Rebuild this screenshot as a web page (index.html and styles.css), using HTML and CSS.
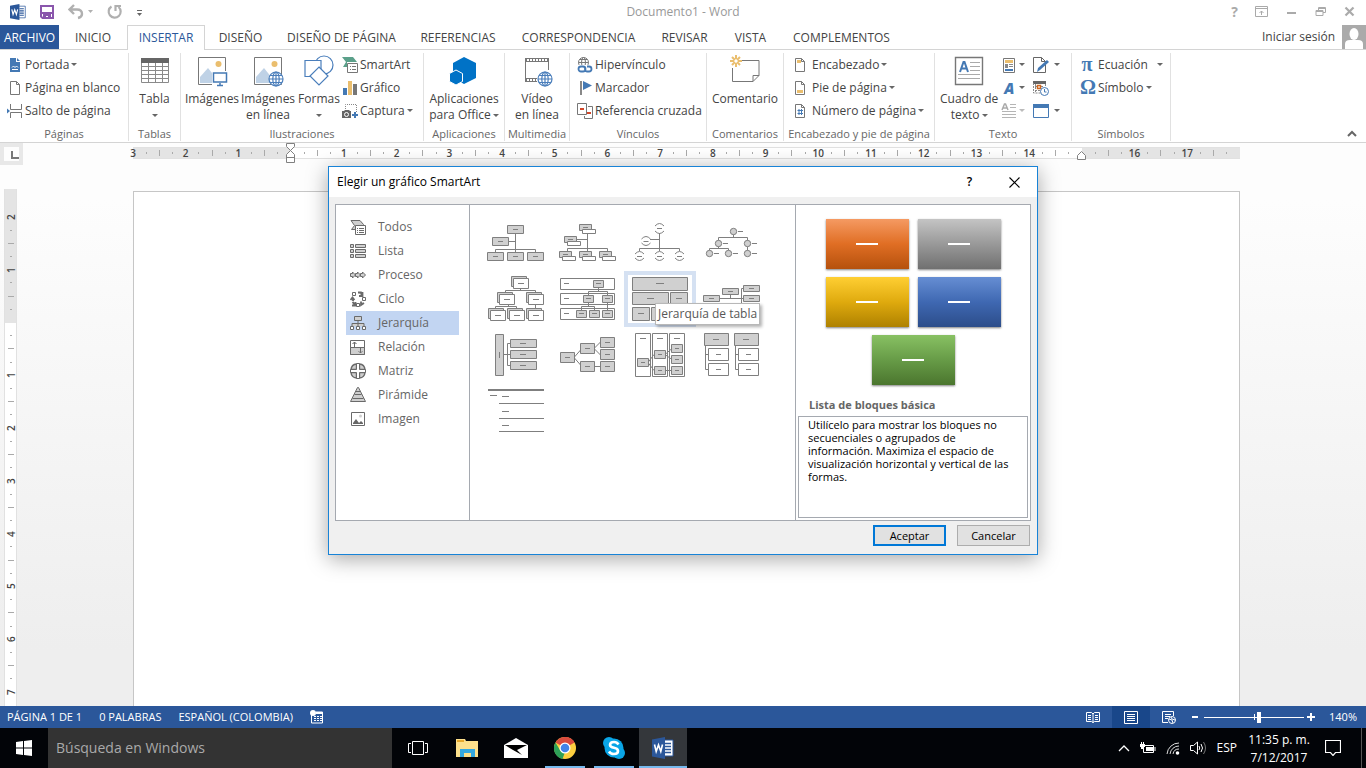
FILE: index.html
```html
<!DOCTYPE html>
<html lang="es">
<head>
    <meta charset="UTF-8">
    <meta name="viewport" content="width=device-width, initial-scale=1.0">
    <title>Documento1 - Word</title>
    <link rel="stylesheet" href="styles.css">
</head>
<body>
    <!-- shared symbols -->
    <svg class="defs" aria-hidden="true">
        <symbol id="word" viewBox="0 0 22 22">
            <path d="M11 3h10v16H11z" fill="#fff" stroke="#2b579a"/>
            <path d="M13 6.5h6M13 9.5h6M13 12.5h6M13 15.5h6" stroke="#2b579a" stroke-width="1.5"/>
            <path d="M0 2.500L13 0v22L0 19.500z" fill="#2b579a"/>
            <path d="M2.500 7.500l1.700 7 2.300-6.500 2.300 6.500 1.700-7" fill="none" stroke="#fff" stroke-width="1.600"/>
        </symbol>
        <symbol id="globe" viewBox="0 0 16 16">
            <circle cx="8" cy="8" r="7" fill="#fff"/>
            <g fill="none" stroke="#4a7ebb" stroke-width="1.200"><circle cx="8" cy="8" r="7"/><ellipse cx="8" cy="8" rx="3.200" ry="7"/><path d="M8 1v14M1 8h14M2 4.500h12M2 11.500h12"/></g>
        </symbol>
        <symbol id="sheet" viewBox="0 0 16 16">
            <path d="M3.500 1.500h6l3 3v10h-9z" fill="#fff" stroke="#777"/>
            <path d="M9.500 1.500v3h3" fill="none" stroke="#777"/>
        </symbol>
        <symbol id="photo" viewBox="0 0 32 32">
            <path d="M2.500 2.500h27v27h-27z" fill="#fff" stroke="#777"/>
            <circle cx="22.500" cy="9" r="3" fill="#eabe6e"/>
            <path d="M4 28V22l8-9 12 15z" fill="#bfd2e6"/>
        </symbol>
    </svg>

    <div class="window">
        <header class="titlebar">
            <div class="quick">
                <svg width="16" height="16"><use href="#word"/></svg>
                <button aria-label="Guardar"><svg width="16" height="16" viewBox="0 0 16 16"><path d="M2 2h12v12H3.500L2 12.500z" fill="#fff" stroke="#8a56ac" stroke-width="2"/><path d="M1 8h14v2H1zM4 10h8v5H9v-3H7v3H4z" fill="#8a56ac"/></svg></button>
                <button aria-label="Deshacer"><svg width="26" height="16" viewBox="0 0 26 16"><path d="M6 1L1.500 5.500 6 10M2 5.500h7q5 0 5 4.500 0 3-4 4" fill="none" stroke="#b0b0b0" stroke-width="2.400"/><path d="M20 6h5l-2.500 3z" fill="#b0b0b0"/></svg></button>
                <button aria-label="Rehacer"><svg width="16" height="16" viewBox="0 0 16 16"><path d="M4.500 2.500a6 6 0 1 0 7 .5M8.500 7V2H14" fill="none" stroke="#b0b0b0" stroke-width="2.200"/></svg></button>
                <button aria-label="Personalizar"><svg width="8" height="16" viewBox="0 0 8 16"><path d="M1 6.500h5" stroke="#666"/><path d="M1 9h5l-2.500 3z" fill="#666"/></svg></button>
            </div>
            <h1>Documento1 - Word</h1>
            <div class="winbtns">
                <button aria-label="Ayuda" class="help">?</button>
                <button aria-label="Opciones de la cinta"><svg width="14" height="12" viewBox="0 0 14 12"><path d="M.5.5h12v10H.5zM.5 2.500h12M6.500 9V5M4.500 7L6.500 5l2 2" fill="none" stroke="#aaa"/></svg></button>
                <button aria-label="Minimizar"><svg width="12" height="12" viewBox="0 0 12 12"><path d="M1 7h9" stroke="#aaa" stroke-width="2"/></svg></button>
                <button aria-label="Restaurar"><svg width="12" height="12" viewBox="0 0 12 12"><path d="M3.500 4V1.500h7v5H8M1 4.500h7v5H1zM1 5.500h7M3 2.500h8" fill="none" stroke="#aaa"/></svg></button>
                <button aria-label="Cerrar"><svg width="12" height="12" viewBox="0 0 12 12"><path d="M1.500 1.500l8 8M9.500 1.500l-8 8" stroke="#aaa" stroke-width="2.200"/></svg></button>
            </div>
        </header>

        <div class="tabrow">
            <nav class="tabs">
                <a href="#" class="file">ARCHIVO</a>
                <a href="#">INICIO</a>
                <a href="#" class="active">INSERTAR</a>
                <a href="#">DISEÑO</a>
                <a href="#">DISEÑO DE PÁGINA</a>
                <a href="#">REFERENCIAS</a>
                <a href="#">CORRESPONDENCIA</a>
                <a href="#">REVISAR</a>
                <a href="#">VISTA</a>
                <a href="#">COMPLEMENTOS</a>
            </nav>
            <a href="#" class="signin">Iniciar sesión
                <svg width="24" height="24" viewBox="0 0 24 24"><path d="M0 0h24v24H0z" fill="#aaa"/><ellipse cx="12" cy="9" rx="4.500" ry="6" fill="#fff"/><path d="M3 24v-5q0-4 5-4h8q5 0 5 4v5z" fill="#fff"/></svg>
            </a>
        </div>

        <div class="ribbon">
            <section class="group pages">
                <div class="tools">
                    <div class="stack">
                        <button class="small drop"><svg width="16" height="16" viewBox="0 0 16 16"><path d="M3 1h6v4h4v10H3z" fill="#4479b4"/><path d="M10 1l3 3h-3z" fill="#4479b4"/><path d="M5 10.500l1.500-1.500L8 10.500 9.500 9l1.500 1.500M5 12.500h6" fill="none" stroke="#fff"/></svg>Portada</button>
                        <button class="small"><svg width="16" height="16"><use href="#sheet"/></svg>Página en blanco</button>
                        <button class="small"><svg width="16" height="16" viewBox="0 0 16 16"><path d="M3.500 1v5.500h11V1M3.500 15v-5.500h11V15" fill="none" stroke="#777"/><path d="M0 5.500L3 8 0 10.500z" fill="#4479b4"/></svg>Salto de página</button>
                    </div>
                </div>
                <h2>Páginas</h2>
            </section>

            <section class="group tables">
                <div class="tools">
                    <button class="big"><svg width="32" height="32" viewBox="0 0 32 32"><path d="M2.500 3.500h27v24h-27zM2 11.500h28M2 15.500h28M2 19.500h28M2 23.500h28M9.500 7v20M16.500 7v20M23.500 7v20" fill="#fff" stroke="#8a8a8a"/><path d="M2 3h28v5H2z" fill="#666"/></svg><span>Tabla</span><span class="arrow"></span></button>
                </div>
                <h2>Tablas</h2>
            </section>

            <section class="group illus">
                <div class="tools">
                    <button class="big"><svg width="32" height="32" viewBox="0 0 32 32"><use href="#photo" width="32" height="32"/><path d="M16 16h16v14H16z" fill="#fff"/><path d="M17.500 18h13v9h-13z" fill="#fff" stroke="#4479b4" stroke-width="1.500"/><path d="M24 28v3M21 30.500h6" stroke="#4479b4" stroke-width="1.500"/></svg><span>Imágenes</span></button>
                    <button class="big"><svg width="32" height="32" viewBox="0 0 32 32"><use href="#photo" width="32" height="32"/><use href="#globe" x="16" y="16" width="16" height="16"/></svg><span>Imágenes<br>en línea</span></button>
                    <button class="big shapes"><svg width="32" height="32" viewBox="0 0 32 32"><g fill="#fff" stroke="#4a7ebb" stroke-width="1.200"><circle cx="21" cy="10" r="9"/><path d="M2 5.500h16v16H2z"/><path d="M16 12l9 9-9 9-9-9z"/></g></svg><span>Formas</span><span class="arrow"></span></button>
                    <div class="stack">
                        <button class="small"><svg width="16" height="16" viewBox="0 0 16 16"><path d="M0 0h11l4 5H5v5H1l3-5z" fill="#5ba08a"/><path d="M5.500 6.500h10v9h-10z" fill="#fff" stroke="#777"/><path d="M8 9.500h1M10 9.500h4M8 12.500h1M10 12.500h4" stroke="#777"/></svg>SmartArt</button>
                        <button class="small"><svg width="16" height="16" viewBox="0 0 16 16"><path d="M1 8h4v7H1z" fill="#4479b4"/><path d="M6 1h4v14H6z" fill="#eabe6e"/><path d="M11 4h4v11h-4z" fill="#777"/></svg>Gráfico</button>
                        <button class="small drop"><svg width="16" height="16" viewBox="0 0 16 16"><path d="M3.500 6V1.500h11V9" fill="none" stroke="#888" stroke-dasharray="1 1"/><path d="M0 8h2l1-1h4l1 1h1v7H0z" fill="#666"/><circle cx="4.500" cy="11.500" r="2" fill="#666" stroke="#fff"/><path d="M13 9v6M10 12h6" stroke="#4479b4" stroke-width="2"/></svg>Captura</button>
                    </div>
                </div>
                <h2>Ilustraciones</h2>
            </section>

            <section class="group apps">
                <div class="tools">
                    <button class="big"><svg width="32" height="32" viewBox="0 0 32 32"><path d="M16 2l12 6v15l-12 6-11-6V8z" fill="#0072c6"/><path d="M8 15l6.500 3.500v8L8 30 1.500 26.500v-8z" fill="#0072c6" stroke="#fff"/></svg><span>Aplicaciones<br>para Office<i class="arrow"></i></span></button>
                </div>
                <h2>Aplicaciones</h2>
            </section>

            <section class="group media">
                <div class="tools">
                    <button class="big"><svg width="32" height="32" viewBox="0 0 32 32"><path d="M4.500 3v23M27.500 3v12" stroke="#777"/><path d="M4 3h24v4H4zM4 23h12v4H4z" fill="#777"/><path d="M6 5h21M6 25h10" stroke="#fff" stroke-width="2" stroke-dasharray="2 1"/><use href="#globe" x="16" y="16" width="16" height="16"/></svg><span>Vídeo<br>en línea</span></button>
                </div>
                <h2>Multimedia</h2>
            </section>

            <section class="group links">
                <div class="tools">
                    <div class="stack">
                        <button class="small"><svg width="16" height="16" viewBox="0 0 16 16"><g fill="none" stroke="#777"><circle cx="6.500" cy="5.500" r="5"/><ellipse cx="6.500" cy="5.500" rx="2" ry="5"/><path d="M1.500 5.500h10M3 2.500h7"/></g><path d="M0 8h16v8H0z" fill="#fff"/><path d="M5 9.500h1a2.500 2.500 0 0 1 0 5H4a2.500 2.500 0 0 1 0-5zM10 9.500h2a2.500 2.500 0 0 1 0 5h-2a2.500 2.500 0 0 1-2-3" fill="none" stroke="#4479b4" stroke-width="1.800"/></svg>Hipervínculo</button>
                        <button class="small"><svg width="16" height="16" viewBox="0 0 16 16"><path d="M3 1h2v14H3z" fill="#888"/><path d="M6 1l9 4.500L6 10z" fill="#4479b4"/></svg>Marcador</button>
                        <button class="small"><svg width="16" height="16" viewBox="0 0 16 16"><path d="M.5.5h9v11h-9zM11 3.500h4.500v12H7.500V13" fill="none" stroke="#777"/><path d="M3 5h4v2H3zM10 9h4v2h-4z" fill="#d2472a"/></svg>Referencia cruzada</button>
                    </div>
                </div>
                <h2>Vínculos</h2>
            </section>

            <section class="group comments">
                <div class="tools">
                    <button class="big"><svg width="32" height="32" viewBox="0 0 32 32"><path d="M12 5.500h18v15l-6 6H3.500V13M30 20.500h-6v6" fill="none" stroke="#777"/><path d="M7 0v4M7 8v4M1 6h4M9 6h4M3 2l3 3M8 7l3 3M11 2L8 5M6 7l-3 3" stroke="#eabe6e" stroke-width="2"/></svg><span>Comentario</span></button>
                </div>
                <h2>Comentarios</h2>
            </section>

            <section class="group header">
                <div class="tools">
                    <div class="stack">
                        <button class="small drop"><svg width="16" height="16" viewBox="0 0 16 16"><use href="#sheet" width="16" height="16"/><path d="M5 3h4v3H5z" fill="#eabe6e"/></svg>Encabezado</button>
                        <button class="small drop"><svg width="16" height="16" viewBox="0 0 16 16"><use href="#sheet" width="16" height="16"/><path d="M5 10h6v3H5z" fill="#eabe6e"/></svg>Pie de página</button>
                        <button class="small drop"><svg width="16" height="16" viewBox="0 0 16 16"><use href="#sheet" width="16" height="16"/><path d="M7 6v6M9.500 6v6M5.500 7.500H11M5.500 10.500H11" stroke="#4479b4"/></svg>Número de página</button>
                    </div>
                </div>
                <h2>Encabezado y pie de página</h2>
            </section>

            <section class="group text">
                <div class="tools">
                    <button class="big"><svg width="32" height="32" viewBox="0 0 32 32"><path d="M2.500 2.500h27v27h-27z" fill="#fff" stroke="#777" stroke-width="1.400"/><path d="M17 7.500h10M17 11.500h10M17 15.500h10M5 19.500h22M5 23.500h22" stroke="#aaa"/><path d="M7 17l3.500-10h1L15 17M8.500 13.500h5" fill="none" stroke="#4479b4" stroke-width="2"/></svg><span>Cuadro de<br>texto<i class="arrow"></i></span></button>
                    <div class="stack icons">
                        <button class="small drop" aria-label="Elementos rápidos"><svg width="16" height="16" viewBox="0 0 16 16"><path d="M2.500 1.500h11v14h-11z" fill="#fff" stroke="#777"/><path d="M4 3h8v3H4z" fill="#eabe6e"/><path d="M4 7h3v4H4z" fill="#888"/><path d="M8 7.500h4M8 9.500h4" stroke="#888"/><path d="M4 12h8v2H4z" fill="#4479b4"/></svg></button>
                        <button class="small drop" aria-label="WordArt"><b class="wordart">A</b></button>
                        <button class="small drop off" aria-label="Letra capital"><svg width="16" height="16" viewBox="0 0 16 16"><path d="M1 7l2.500-6h1L7 7M2 5h4" fill="none" stroke="#aaa" stroke-width="1.500"/><path d="M9 1.500h6M9 4.500h6M1 8.500h14M1 11.500h14M1 14.500h14" stroke="#b5b5b5"/></svg></button>
                    </div>
                    <div class="stack icons">
                        <button class="small drop" aria-label="Línea de firma"><svg width="16" height="16" viewBox="0 0 16 16"><path d="M.5.5h8l4 4v11H.5zM8.500.500v4h4" fill="#fff" stroke="#666"/><path d="M4 15l1-4 9-8 2 2-9 8z" fill="#4479b4"/></svg></button>
                        <button class="small" aria-label="Fecha y hora"><svg width="16" height="16" viewBox="0 0 16 16"><path d="M0 1h13v3H0z" fill="#666"/><path d="M.5 3v10h7M12.500 4v3M2 6.500h9M2 10.500h5M2.500 4v8" fill="none" stroke="#888" stroke-dasharray="2 1"/><path d="M4.500 5.500h3v3h-3z" fill="#fff" stroke="#d2671e" stroke-width="1.500"/><circle cx="11.500" cy="11.500" r="4" fill="#fff" stroke="#4479b4"/><path d="M11.500 9v3h2" fill="none" stroke="#4479b4"/></svg></button>
                        <button class="small drop" aria-label="Objeto"><svg width="16" height="16" viewBox="0 0 16 16"><path d="M.5 1.500h15v13H.5z" fill="#fff" stroke="#4479b4"/><path d="M0 1h16v4H0z" fill="#4479b4"/></svg></button>
                    </div>
                </div>
                <h2>Texto</h2>
            </section>

            <section class="group symbols">
                <div class="tools">
                    <div class="stack">
                        <button class="small drop wide"><b>π</b>Ecuación</button>
                        <button class="small drop"><b>Ω</b>Símbolo</button>
                    </div>
                </div>
                <h2>Símbolos</h2>
            </section>
            <button class="collapse" aria-label="Contraer la cinta"><svg width="10" height="8" viewBox="0 0 10 8"><path d="M1 6l4-4 4 4" fill="none" stroke="#666" stroke-width="2"/></svg></button>
        </div>

        <main class="workspace">
            <div class="topruler">
                <div class="corner"><span></span></div>
                <div class="ruler">
                    <span class="cm out"><b>3</b><i></i><i></i><i></i></span>
                    <span class="cm out"><b>2</b><i></i><i></i><i></i></span>
                    <span class="cm out"><b>1</b><i></i><i></i><i></i></span>
                    <span class="cm"><b><svg width="10" height="20" viewBox="0 0 10 20"><path d="M.5.500h8v3l-4 4 4 4v8h-8v-8l4-4-4-4zM.5 14.500h8" fill="#fff" stroke="#808080"/></svg></b><i></i><i></i><i></i></span>
                    <span class="cm"><b>1</b><i></i><i></i><i></i></span>
                    <span class="cm"><b>2</b><i></i><i></i><i></i></span>
                    <span class="cm"><b>3</b><i></i><i></i><i></i></span>
                    <span class="cm"><b>4</b><i></i><i></i><i></i></span>
                    <span class="cm"><b>5</b><i></i><i></i><i></i></span>
                    <span class="cm"><b>6</b><i></i><i></i><i></i></span>
                    <span class="cm"><b>7</b><i></i><i></i><i></i></span>
                    <span class="cm"><b>8</b><i></i><i></i><i></i></span>
                    <span class="cm"><b>9</b><i></i><i></i><i></i></span>
                    <span class="cm"><b>10</b><i></i><i></i><i></i></span>
                    <span class="cm"><b>11</b><i></i><i></i><i></i></span>
                    <span class="cm"><b>12</b><i></i><i></i><i></i></span>
                    <span class="cm"><b>13</b><i></i><i></i><i></i></span>
                    <span class="cm"><b>14</b><i></i><i></i><i></i></span>
                    <span class="cm out"><b><svg width="10" height="20" viewBox="0 0 10 20"><path d="M.5 16.500v-4l4-4 4 4v4z" fill="#fff" stroke="#808080"/></svg></b><i></i><i></i><i></i></span>
                    <span class="cm out"><b>16</b><i></i><i></i><i></i></span>
                    <span class="cm out"><b>17</b><i></i><i></i><i></i></span>
                </div>
            </div>
            <div class="canvas">
                <div class="sideruler">
                    <span class="cm out"></span>
                    <span class="cm out"><b>2</b><i></i><i></i><i></i></span>
                    <span class="cm out"><b>1</b><i></i><i></i><i></i></span>
                    <span class="cm"><b></b><i></i><i></i><i></i></span>
                    <span class="cm"><b>1</b><i></i><i></i><i></i></span>
                    <span class="cm"><b>2</b><i></i><i></i><i></i></span>
                    <span class="cm"><b>3</b><i></i><i></i><i></i></span>
                    <span class="cm"><b>4</b><i></i><i></i><i></i></span>
                    <span class="cm"><b>5</b><i></i><i></i><i></i></span>
                    <span class="cm"><b>6</b><i></i><i></i><i></i></span>
                    <span class="cm last"><b>7</b></span>
                </div>
                <div class="page"></div>
            </div>
        </main>

        <footer class="status">
            <span>PÁGINA 1 DE 1</span>
            <span>0 PALABRAS</span>
            <span>ESPAÑOL (COLOMBIA)</span>
            <svg width="14" height="14" viewBox="0 0 14 14"><path d="M1.500 5v8h11V2H6" fill="none" stroke="#fff"/><path d="M6 2h7v2H6z" fill="#fff"/><circle cx="3" cy="3" r="3" fill="#fff"/><path d="M4 6.500h8M4 8.500h8M4 10.500h8" stroke="#fff" stroke-dasharray="2 1"/></svg>
            <div class="views">
                <button aria-label="Modo de lectura"><svg width="14" height="12" viewBox="0 0 14 12"><path d="M.5 1.500h5L7 3l1.500-1.500h5v9h-5L7 11.500l-1.500-1h-5zM7 3v9M2 4.500h3M2 6.500h3M2 8.500h3M9 4.500h3M9 6.500h3M9 8.500h3" fill="none" stroke="#fff"/></svg></button>
                <button aria-label="Diseño de impresión" class="on"><svg width="14" height="13" viewBox="0 0 14 13"><path d="M.5.5h13v12H.5zM3 3.500h8M3 5.500h8M3 7.500h8M3 9.500h8" fill="none" stroke="#fff"/></svg></button>
                <button aria-label="Diseño web"><svg width="14" height="13" viewBox="0 0 14 13"><path d="M6 11.500H.5V.5h11V5M3 3.500h6M3 5.500h5M3 7.500h3" fill="none" stroke="#fff"/><circle cx="10" cy="9" r="3.500" fill="#2b579a" stroke="#fff"/><path d="M7 8l3 1 1 3M9 6l1 2 3 1" fill="none" stroke="#fff"/></svg></button>
            </div>
            <button class="sign" aria-label="Alejar"><svg width="8" height="8" viewBox="0 0 8 8"><path d="M1 4h6" stroke="#fff" stroke-width="2"/></svg></button>
            <input type="range" class="zoom" min="0" max="100" value="55" aria-label="Zoom">
            <button class="sign" aria-label="Acercar"><svg width="8" height="8" viewBox="0 0 8 8"><path d="M0 4h8M4 0v8" stroke="#fff" stroke-width="2"/></svg></button>
            <span class="percent">140%</span>
        </footer>

        <footer class="taskbar">
            <button class="start" aria-label="Inicio"><svg width="16" height="16" viewBox="0 0 16 16"><path d="M0 2l7-1v6.500H0zM8 .900L16 0v7.500H8zM0 8.500h7V15l-7-1zM8 8.500h8V16l-8-1z" fill="#fff"/></svg></button>
            <input type="text" class="search" placeholder="Búsqueda en Windows" aria-label="Búsqueda en Windows">
            <button class="task" aria-label="Vista de tareas"><svg width="20" height="16" viewBox="0 0 20 16"><path d="M4.500 1.500h11v13h-11zM3 3.500H.5v9H3M17 3.500h2.500v9H17" fill="none" stroke="#fff"/></svg></button>
            <button class="task" aria-label="Explorador de archivos"><svg width="22" height="20" viewBox="0 0 22 20"><path d="M0 1h9l1 2h12v16H0z" fill="#fde08c"/><path d="M1 3h7" stroke="#e8a92c" stroke-width="2"/><path d="M4 11h15v8h-4v-4H8v4H4z" fill="#34a8e0"/></svg></button>
            <button class="task" aria-label="Correo"><svg width="24" height="20" viewBox="0 0 24 20"><path d="M0 7l12-7 12 7v13H0z" fill="#fff"/><path d="M1 7h22L13 12l5 5-9-5z" fill="#000"/></svg></button>
            <button class="task run" aria-label="Chrome"><svg width="22" height="22" viewBox="0 0 22 22"><circle cx="11" cy="11" r="11" fill="#fdcf3f"/><path d="M11 11L1.500 5.500A11 11 0 0 1 20.500 5.500z" fill="#d94b3e"/><path d="M11 0a11 11 0 0 1 9.500 5.500H11z" fill="#d94b3e"/><path d="M1.500 5.500L6.500 14 11 15l-2.500 7A11 11 0 0 1 1.500 5.500z" fill="#2ea058"/><circle cx="11" cy="11" r="5.500" fill="#fff"/><circle cx="11" cy="11" r="4.300" fill="#4283e8"/></svg></button>
            <button class="task run" aria-label="Skype"><svg width="22" height="22" viewBox="0 0 22 22"><g fill="#0aa5e6"><circle cx="11" cy="11" r="9.500"/><circle cx="6" cy="6" r="6"/><circle cx="16" cy="16" r="6"/></g><path d="M15.500 7.500Q14 5 11 5 7 5 7 8q0 2 4 2.800t4 3.200q0 3-4 3-3.500 0-5-2.500" fill="none" stroke="#fff" stroke-width="2.600"/></svg></button>
            <button class="task run current" aria-label="Word"><svg width="22" height="22"><use href="#word"/></svg></button>
            <div class="tray">
                <svg width="12" height="8" viewBox="0 0 12 8"><path d="M1 7l5-5 5 5" fill="none" stroke="#fff" stroke-width="1.300"/></svg>
                <svg width="16" height="12" viewBox="0 0 16 12"><path d="M4.500 3.500h9v7h-10V7M15 5v4" fill="none" stroke="#fff"/><path d="M6 5h7v4H6zM0 2h5v3H4v2H1V5H0zM1 0h1v2H1zM3 0h1v2H3z" fill="#fff"/></svg>
                <svg width="14" height="14" viewBox="0 0 14 14"><g fill="none" stroke="#ddd"><path d="M1 13A12 12 0 0 1 13 2M4 13a9 9 0 0 1 9-8M7 13a6 6 0 0 1 6-5"/></g><circle cx="11.500" cy="12" r="1.800" fill="#fff"/></svg>
                <svg width="17" height="14" viewBox="0 0 17 14"><path d="M.5 4.500h3l4-3.500v12l-4-3.500h-3zM9 5q1.500 2 0 4" fill="none" stroke="#fff"/><path d="M11 3q3 4 0 8" fill="none" stroke="#fff"/><path d="M13.500 1q4 6 0 12" fill="none" stroke="#777"/></svg>
                <span class="lang">ESP</span>
                <time>11:35 p. m.<br>7/12/2017</time>
                <svg class="notes" width="16" height="16" viewBox="0 0 16 16"><path d="M.5.500h15v12h-5l-2.500 3-2.500-3h-5z" fill="none" stroke="#fff" stroke-width="1.200"/></svg>
                <span class="peek"></span>
            </div>
        </footer>
    </div>

    <!-- SmartArt dialog -->
    <div class="dialog" role="dialog" aria-labelledby="dlgTitle">
        <div class="dlg-title">
            <h2 id="dlgTitle">Elegir un gráfico SmartArt</h2>
            <button aria-label="Ayuda">?</button>
            <button aria-label="Cerrar"><svg width="11" height="11" viewBox="0 0 11 11"><path d="M.5.5l10 10M10.500.5l-10 10" stroke="#000" stroke-width="1.100"/></svg></button>
        </div>
        <div class="dlg-body">
            <div class="cats">
                <button><svg width="16" height="16" viewBox="0 0 16 16"><path d="M1 1.500h9l3.500 4-1 1H6v4H1.500l3-4z"/><path d="M5.500 6.500h10v9h-10z" fill="#fff"/><path d="M7 9.500h1M9 9.500h5M7 11.500h1M9 11.500h5M7 13.500h1M9 13.500h5"/></svg>Todos</button>
                <button><svg width="16" height="16" viewBox="0 0 16 16"><path d="M.5 1.500h3v3h-3zM5.500 1.500h10v3h-10zM.5 6.500h3v3h-3zM5.500 6.500h10v3h-10zM.5 11.500h3v3h-3zM5.500 11.500h10v3h-10z"/></svg>Lista</button>
                <button><svg width="16" height="16" viewBox="0 0 16 16"><path d="M.5 6.500h2v-1.500l3 3-3 3V9.500h-2zM5.500 6.500h2v-1.500l3 3-3 3V9.500h-2zM10.500 6.500h2v-1.500l3 3-3 3V9.500h-2z"/></svg>Proceso</button>
                <button><svg width="16" height="16" viewBox="0 0 16 16"><path d="M2.500 1.500h3v3h-3zM12.500 6.500h3v3h-3zM6.500 12.500h3v3h-3z" fill="#fff"/><g stroke-width="1.800"><path d="M8 1.500h3l1 3M12.500 1v4H9M.5 9l2-2.500 2 2.500M3 7v3M2.500 11l3 3M5.500 11v3.500H2M14 12l-3 2v-3.500"/></g></svg>Ciclo</button>
                <button class="sel"><svg width="16" height="16" viewBox="0 0 16 16"><path d="M4.500 1.500h7v4h-7zM8 5.500v6M2 11V8.500h12V11" /><path d="M.5 11.500h3v3h-3zM6.500 11.500h3v3h-3zM12.500 11.500h3v3h-3z" fill="#fff"/></svg>Jerarquía</button>
                <button><svg width="16" height="16" viewBox="0 0 16 16"><path d="M.5 1.500h14v14H.5z" fill="#fff"/><path d="M.5 8.500h14v7H.5zM4.500 8V3M2.500 5l2-2 2 2M10.500 9v5M8.500 12l2 2 2-2"/></svg>Relación</button>
                <button><svg width="16" height="16" viewBox="0 0 16 16"><path d="M6.500 1q-5 .5-5.500 5.500h5.500zM9.500 1q5 .5 5.500 5.500H9.500zM6.500 15q-5-.5-5.500-5.500h5.500zM9.500 15q5-.5 5.500-5.500H9.500z" stroke-width="1.400"/><path d="M6.500.5h3v6h6v3h-6v6h-3v-6h-6v-3h6z" fill="#fff"/></svg>Matriz</button>
                <button><svg width="16" height="16" viewBox="0 0 16 16"><path d="M7.500.500h1l7 14h-15zM6 4.500h4M4.500 7.500h7M2.500 11.500h11"/></svg>Pirámide</button>
                <button><svg width="16" height="16" viewBox="0 0 16 16"><path d="M1.500 1.500h13v13h-13z" fill="#fff"/><path d="M3 12l3-4 3 4 2-2 2 2v1H3z" fill="#666" stroke="none"/><circle cx="10.500" cy="5" r="1.500" stroke="none"/></svg>Imagen</button>
            </div>
            <div class="gallery">
                <button aria-label="Organigrama"><svg viewBox="0 0 72 56"><path d="M35.500 18v19M28 26.500h7.500M15.500 37v-2.500h40V37"/><path class="n" d="M27.500 10.500h16v8h-16zM12.500 22.500h16v8h-16zM7.500 37.500h16v8h-16zM27.500 37.500h16v8h-16zM47.500 37.500h16v8h-16z"/><path d="M33 14.500h5M18 26.500h5M13 41.500h5M33 41.500h5M53 41.500h5"/></svg></button>
                <button aria-label="Organigrama con nombres"><svg viewBox="0 0 72 56"><path d="M35.500 18v19M25 24.500h10.500M15.500 37v-3.500h40V37"/><path class="n" d="M27.500 9.500h12v6h-12zM12.500 21.500h12v6h-12zM7.500 36.500h12v6h-12zM27.500 36.500h12v6h-12zM47.500 36.500h12v6h-12z"/><path d="M31 12.500h5M16 24.500h5M11 39.500h5M31 39.500h5M51 39.500h5"/><path class="w" d="M30.500 14.500h13v4h-13zM15.500 26.500h13v4h-13zM10.500 41.500h13v4h-13zM30.500 41.500h13v4h-13zM50.500 41.500h13v4h-13z"/></svg></button>
                <button aria-label="Organigrama con semicírculos"><svg viewBox="0 0 72 56"><path d="M35.500 18v18M26 24.500h9.500M15.500 36v-2.500h40V36"/><path d="M31 11q4.500-5 9 0M31 16q4.500 5 9 0M17.500 24q4.500-5 9 0M17.500 28q4.500 5 9 0M11 39q4.500-5 9 0M11 43q4.500 5 9 0M31 39q4.500-5 9 0M31 43q4.500 5 9 0M51 39q4.500-5 9 0M51 43q4.500 5 9 0M33 13.500h5M19.500 26.500h5M13 41.500h5M33 41.500h5M53 41.500h5"/></svg></button>
                <button aria-label="Jerarquía con imágenes circulares"><svg viewBox="0 0 72 56"><path d="M37.500 18v4.500M22.500 28v-5.500h29V38M22.500 30v3.500M13.500 36v-2.500h19V36"/><g class="n"><circle cx="37.500" cy="16.500" r="3.200"/><circle cx="22.500" cy="28.500" r="3.200"/><circle cx="51.500" cy="28.500" r="3.200"/><circle cx="13.500" cy="38.500" r="3.200"/><circle cx="32.500" cy="38.500" r="3.200"/><circle cx="51.500" cy="38.500" r="3.200"/></g><path d="M42 16.500h5M27 28.500h5M56 28.500h5M18 38.500h5M37 38.500h5M56 38.500h5"/></svg></button>

                <button aria-label="Jerarquía"><svg viewBox="0 0 72 56"><path d="M40.500 17v2.500M25.500 23v-3.500h30V40M28.500 33v2.500M15.500 39v-3.500h21V39"/><path class="n" d="M31.500 5.500h15v10h-15zM17.500 21.500h15v10h-15zM46.500 21.500h15v10h-15zM8.500 37.500h15v10h-15zM27.500 37.500h15v10h-15zM46.500 37.500h15v10h-15z"/><path class="w" d="M33.500 7.500h15v10h-15zM19.500 23.500h15v10h-15zM48.500 23.500h15v10h-15zM10.500 39.500h15v10h-15zM29.500 39.500h15v10h-15zM48.500 39.500h15v10h-15z"/><path d="M38 12.500h6M24 28.500h6M53 28.500h6M15 44.500h6M34 44.500h6M53 44.500h6"/></svg></button>
                <button aria-label="Jerarquía etiquetada"><svg viewBox="0 0 72 56"><path class="w" d="M8.500 7.500h54v11h-54zM8.500 22.500h54v11h-54zM8.500 37.500h54v11h-54z"/><path d="M46.500 16v4.500M36.500 24v-3.500h19V40M36.500 31v4.500M29.500 39v-3.500h13V39"/><path class="n" d="M41.500 9.500h10v7h-10zM31.500 24.500h10v7h-10zM50.500 24.500h10v7h-10zM24.500 39.500h10v7h-10zM37.500 39.500h10v7h-10zM50.500 39.500h10v7h-10z"/><path d="M12 12.500h5M12 27.500h5M12 42.500h5M44 12.500h5M34 27.500h5M53 27.500h5M27 42.500h5M40 42.500h5M53 42.500h5"/></svg></button>
                <button aria-label="Jerarquía de tabla" class="sel"><svg viewBox="0 0 72 56"><path class="n" d="M8.500 6.500h55v13h-55zM8.500 21.500h36v12h-36zM46.500 21.500h17v12h-17zM8.500 36.500h17v13h-17zM27.500 36.500h17v13h-17zM46.500 36.500h17v13h-17z"/><path d="M32 12.500h8M23 27.500h7M52 27.500h6M14 42.500h6M33 42.500h6M52 42.500h6"/></svg><span class="tip">Jerarquía de tabla</span></button>
                <button aria-label="Organigrama horizontal"><svg viewBox="0 0 72 56"><path d="M24 27.500h24M34.500 24v3.500M48 17.500h-2.500v20H48"/><path class="n" d="M7.500 24.500h16v6h-16zM26.500 17.500h16v6h-16zM47.500 14.500h16v6h-16zM47.500 24.500h16v6h-16zM47.500 34.500h16v6h-16z"/><path d="M13 27.500h5M32 20.500h5M53 17.500h5M53 27.500h5M53 37.500h5"/></svg></button>

                <button aria-label="Jerarquía multinivel horizontal"><svg viewBox="0 0 72 56"><path d="M24 27.500h7M31 16.500h-3.500v22H31"/><path class="n" d="M15.500 7.500h8v41h-8zM30.500 12.500h26v8h-26zM30.500 23.500h26v8h-26zM30.500 34.500h26v8h-26z"/><path d="M19.500 25v6M40 16.500h6M40 27.500h6M40 38.500h6"/></svg></button>
                <button aria-label="Jerarquía horizontal"><svg viewBox="0 0 72 56"><path d="M22 30.500l7-8M22 30.500l7 8M42 21.500l7-7M42 21.500l7 7M42 39.500h7"/><path class="n" d="M8.500 25.500h14v10h-14zM28.500 16.500h14v10h-14zM28.500 34.500h14v10h-14zM48.500 10.500h14v10h-14zM48.500 22.500h14v10h-14zM48.500 34.500h14v10h-14z"/><path d="M13 30.500h5M33 21.500h5M33 39.500h5M53 15.500h5M53 27.500h5M53 39.500h5"/></svg></button>
                <button aria-label="Jerarquía etiquetada horizontal"><svg viewBox="0 0 72 56"><path class="w" d="M11.500 6.500h15v43h-15zM28.500 6.500h15v43h-15zM45.500 6.500h15v43h-15z"/><path d="M24 35.500l6-8M24 35.500l6 8M41 27.500l7-6M41 27.500l7 5M41 43.500h7"/><path class="n" d="M13.500 31.500h11v8h-11zM30.500 23.500h11v8h-11zM30.500 39.500h11v8h-11zM47.500 17.500h11v8h-11zM47.500 28.500h11v8h-11zM47.500 39.500h11v8h-11z"/><path d="M16 11.500h6M33 11.500h6M50 11.500h6M17 35.500h4M34 27.500h4M34 43.500h4M51 21.500h4M51 32.500h4M51 43.500h4"/></svg></button>
                <button aria-label="Lista de jerarquías"><svg viewBox="0 0 72 56"><path d="M9.500 19v23.500H12M9.500 27.500H12M39.500 19v23.500H42M39.500 27.500H42"/><path class="n" d="M8.500 6.500h24v12h-24zM38.500 6.500h24v12h-24z"/><path class="w" d="M12.500 21.500h20v12h-20zM12.500 36.500h20v12h-20zM42.500 21.500h20v12h-20zM42.500 36.500h20v12h-20z"/><path d="M17 12.500h6M47 12.500h6M20 27.500h5M20 42.500h5M50 27.500h5M50 42.500h5"/></svg></button>

                <button aria-label="Lista con líneas"><svg viewBox="0 0 72 56"><path d="M8 7h56" stroke-width="2"/><path d="M19 20.500h45M19 35.500h45M19 48.500h45M10 12.500h7M22 13.500h7M22 28.500h7M22 42.500h7"/></svg></button>
            </div>
            <div class="preview">
                <div class="tiles">
                    <span class="orange"></span>
                    <span class="gray"></span>
                    <span class="gold"></span>
                    <span class="blue"></span>
                    <span class="green"></span>
                </div>
                <h3>Lista de bloques básica</h3>
                <p>Utilícelo para mostrar los bloques no secuenciales o agrupados de información. Maximiza el espacio de visualización horizontal y vertical de las formas.</p>
            </div>
        </div>
        <div class="dlg-foot">
            <button class="ok">Aceptar</button>
            <button>Cancelar</button>
        </div>
    </div>
</body>
</html>
```
FILE: styles.css
```css
* {
    box-sizing: border-box;
}
body {
    margin: 0;
    font-family: "Open Sans", "Noto Sans", sans-serif;
    font-size: 12px;
    line-height: 16px;
    color: #444;
}
button, input {
    font: inherit;
    color: inherit;
}
button {
    margin: 0;
    padding: 0;
    border: none;
    background: none;
}
a {
    color: inherit;
    text-decoration: none;
}
h1, h2, h3, p {
    margin: 0;
    font-size: 12px;
    font-weight: normal;
}
svg {
    display: block;
    flex: none;
}
.defs {
    position: absolute;
    width: 0;
    height: 0;
}
.window {
    display: flex;
    flex-direction: column;
    height: 100vh;
    overflow: hidden;
    background: #fff;
}

/* title bar */
.titlebar {
    display: grid;
    grid-template-columns: 1fr auto 1fr;
    align-items: center;
    height: 24px;
    padding: 0 10px;
}
.titlebar h1 {
    color: #999;
}
.quick {
    display: flex;
    align-items: center;
    gap: 13px;
}
.winbtns {
    display: flex;
    align-items: center;
    justify-content: flex-end;
    gap: 17px;
}
.help {
    font-size: 14px;
    font-weight: bold;
    color: #aaa;
}

/* tabs */
.tabrow {
    display: flex;
    justify-content: space-between;
    height: 26px;
    padding-top: 1px;
    border-bottom: 1px solid #d4d4d4;
}
.tabs {
    display: grid;
    grid-template-columns: 59px 68px 78px 71px 131px 102px 139px 73px 59px 123px;
}
.tabs a {
    height: 25px;
    line-height: 25px;
    text-align: center;
    white-space: nowrap;
}
.tabs .file {
    height: 24px;
    background: #2b579a;
    color: #fff;
}
.tabs .active {
    border: 1px solid #d4d4d4;
    border-bottom: none;
    background: #fff;
    color: #2b579a;
    line-height: 23px;
}
.signin {
    display: flex;
    align-items: center;
    gap: 7px;
}

/* ribbon */
.ribbon {
    display: flex;
    height: 93px;
    padding: 3px 0 1px;
    border-bottom: 1px solid #d4d4d4;
}
.group {
    display: flex;
    flex-direction: column;
    flex: none;
    border-right: 1px solid #e1e1e1;
}
.group h2 {
    font-size: 11px;
    line-height: 14px;
    text-align: center;
    color: #666;
    white-space: nowrap;
}
.tools {
    display: flex;
    justify-content: center;
    flex: 1;
}
.pages { width: 129px; }
.tables { width: 52px; }
.illus { width: 243px; }
.apps { width: 81px; }
.media { width: 65px; }
.links { width: 137px; }
.comments { width: 77px; }
.header { width: 151px; }
.text { width: 137px; }
.symbols { width: 99px; }
.pages .tools, .links .tools {
    justify-content: flex-start;
    padding-left: 7px;
}
.illus .tools {
    justify-content: flex-start;
    padding-left: 3px;
}
.header .tools, .symbols .tools {
    justify-content: flex-start;
    padding-left: 8px;
}
.text .tools {
    justify-content: flex-start;
    padding-left: 5px;
}
.big {
    display: flex;
    flex-direction: column;
    align-items: center;
    gap: 4px;
    padding-top: 2px;
    white-space: nowrap;
}
.illus .big {
    width: 56px;
}
.illus .shapes {
    width: 46px;
}
.stack {
    display: flex;
    flex-direction: column;
}
.small {
    display: flex;
    align-items: center;
    gap: 2px;
    height: 23px;
    white-space: nowrap;
}
.header .small svg, .symbols .small b {
    margin-right: 2px;
}
.small b {
    width: 14px;
    font: bold 20px "Liberation Serif", serif;
    color: #4479b4;
}
.small .wordart {
    width: 16px;
    font: italic 800 15px "Open Sans", sans-serif;
    text-align: center;
}
.arrow, .drop::after {
    content: "";
    border: 3px solid transparent;
    border-top-color: #666;
    border-bottom: none;
}
.big > .arrow {
    margin-top: 3px;
}
i.arrow {
    display: inline-block;
    margin-left: 2px;
    vertical-align: 2px;
}
.wide::after {
    margin-left: 7px;
}
.off::after {
    border-top-color: #bbb;
}
.icons {
    padding-left: 3px;
}
.icons + .icons {
    padding-left: 8px;
}
.icons + .icons .small {
    gap: 5px;
}
.collapse {
    align-self: flex-end;
    margin: 0 9px 3px auto;
}

/* document area */
.workspace {
    display: flex;
    flex-direction: column;
    flex: 1;
    min-height: 0;
    background: linear-gradient(#fdfdfd 10%, #eeeeee 90%);
}
.topruler {
    display: flex;
    height: 46px;
}
.corner {
    width: 23px;
    height: 22px;
    padding: 4px;
    background: #e8e8e8;
}
.corner span {
    display: block;
    height: 14px;
    padding: 4px 3px 0 7px;
    background: #fdfdfd;
}
.corner span::before {
    content: "";
    display: block;
    width: 6px;
    height: 6px;
    border-left: 2px solid #777;
    border-bottom: 2px solid #777;
}
.ruler {
    display: grid;
    grid-template-columns: repeat(21, 1fr);
    flex: 1;
    height: 12px;
    margin: 4px 126px 0 110px;
}
.cm {
    display: grid;
    grid-template-columns: repeat(4, 1fr);
    background: #fff;
    box-shadow: inset 0 1px #e1e1e1, inset 0 -1px #e1e1e1;
}
.cm.out {
    background: #e4e4e4;
}
.cm b, .cm i {
    display: flex;
    align-items: center;
    justify-content: center;
    width: 0;
    height: 12px;
    font-size: 10px;
    font-weight: 600;
}
.cm b {
    z-index: 1;
}
.cm i::before {
    content: "";
    flex: none;
    width: 1px;
    height: 2px;
    background: #aaa;
}
.cm i:nth-child(3)::before {
    height: 6px;
}
.canvas {
    display: flex;
    flex: 1;
    min-height: 0;
}
.sideruler {
    display: grid;
    grid-template-rows: 28px repeat(9, 1fr) 14px;
    width: 13px;
    margin-left: 4px;
}
.sideruler .cm {
    grid-template-columns: 1fr;
    grid-template-rows: repeat(4, 1fr);
    box-shadow: inset 1px 0 #e1e1e1, inset -1px 0 #e1e1e1;
}
.sideruler b, .sideruler i {
    width: 13px;
    height: 0;
}
.sideruler b {
    writing-mode: vertical-rl;
    transform: rotate(180deg);
}
.sideruler i::before {
    width: 2px;
    height: 1px;
}
.sideruler i:nth-child(3)::before {
    width: 6px;
    height: 1px;
}
.page {
    flex: 1;
    margin: 2px 126px 0 116px;
    border: 1px solid #c6c6c6;
    border-bottom: none;
    background: #fff;
}

/* status bar */
.status {
    display: flex;
    align-items: center;
    gap: 17px;
    height: 22px;
    padding: 0 9px 0 7px;
    background: #2b579a;
    color: #fff;
    font-size: 11px;
}
.views {
    display: flex;
    align-self: stretch;
    margin-left: auto;
}
.views button {
    display: flex;
    align-items: center;
    justify-content: center;
    width: 38px;
}
.views .on {
    background: #19478a;
}
.sign {
    margin: 0 -12px 0 -14px;
}
.zoom {
    appearance: none;
    width: 100px;
    height: 12px;
    margin: 0;
    background: linear-gradient(#fff, #fff) center / 100% 1px no-repeat, linear-gradient(#fff, #fff) center / 1px 6px no-repeat;
}
.zoom::-webkit-slider-thumb {
    appearance: none;
    width: 4px;
    height: 11px;
    background: #fff;
}
.percent {
    margin-left: 9px;
}

/* taskbar */
.taskbar {
    display: flex;
    gap: 1px;
    height: 40px;
    background: #020408;
    color: #fff;
}
.start {
    display: flex;
    align-items: center;
    justify-content: center;
    width: 47px;
}
.search {
    width: 344px;
    padding: 0 8px;
    border: none;
    border-radius: 0;
    background: #333;
    font-size: 14px;
}
.search::placeholder {
    color: #aaa;
}
.task {
    display: flex;
    align-items: center;
    justify-content: center;
    width: 48px;
}
.search + .task {
    width: 49px;
}
.task.run {
    background: linear-gradient(#76b9ed, #76b9ed) bottom / 40px 2px no-repeat;
}
.task.current {
    background: linear-gradient(#76b9ed, #76b9ed) bottom / 100% 2px no-repeat #34373b;
}
.tray {
    display: flex;
    align-items: center;
    gap: 10px;
    margin-left: auto;
}
.tray time {
    width: 64px;
    padding-top: 1px;
    line-height: 18px;
    text-align: center;
    white-space: nowrap;
}
.notes {
    margin-left: 4px;
}
.peek {
    align-self: stretch;
    width: 5px;
    margin-left: 10px;
    border-left: 1px solid #555;
}

/* SmartArt dialog */
.dialog {
    position: absolute;
    top: 166px;
    left: 50%;
    width: 710px;
    margin-left: -355px;
    border: 1px solid #1883d7;
    background: #f0f0f0;
    box-shadow: 0 4px 20px rgba(0, 0, 0, 0.35);
    color: #000;
}
.dlg-title {
    display: flex;
    align-items: center;
    height: 30px;
    padding-left: 8px;
    background: #fff;
}
.dlg-title h2 {
    flex: 1;
}
.dlg-title button {
    display: flex;
    justify-content: center;
    width: 45px;
    font-weight: 600;
}
.dlg-body {
    display: grid;
    grid-template-columns: 134px 326px 1fr;
    height: 317px;
    margin: 7px 6px 0;
    border: 1px solid #a5a9b0;
    background: #fff;
}
.cats {
    display: flex;
    flex-direction: column;
    padding: 10px;
    border-right: 1px solid #a5a9b0;
}
.cats button {
    display: flex;
    align-items: center;
    gap: 12px;
    height: 24px;
    padding-left: 4px;
    color: #666;
}
.cats .sel {
    background: #c2d5f2;
}
.cats svg, .gallery svg {
    fill: #cfcfcf;
    stroke: #6a6a6a;
}
.gallery {
    display: grid;
    grid-template-columns: repeat(4, 72px);
    grid-auto-rows: 56px;
    padding: 10px;
    border-right: 1px solid #a5a9b0;
}
.gallery svg {
    width: 72px;
    height: 56px;
    fill: none;
    stroke: #7f7f7f;
}
.gallery .n {
    fill: #d0d0d0;
}
.gallery .w {
    fill: #fff;
}
.gallery .sel {
    position: relative;
    box-shadow: inset 0 0 0 4px #d5e1f2;
}
.tip {
    position: absolute;
    top: 32px;
    left: 31px;
    z-index: 1;
    padding: 1px 2px;
    border: 1px solid #b8b8b8;
    background: #fff;
    box-shadow: 2px 2px 3px rgba(0, 0, 0, 0.3);
    line-height: 18px;
    color: #575757;
    white-space: nowrap;
}
.preview {
    display: flex;
    flex-direction: column;
    padding: 14px 2px 2px;
}
.tiles {
    display: flex;
    flex-wrap: wrap;
    justify-content: center;
    gap: 8px 9px;
}
.tiles span {
    display: flex;
    align-items: center;
    justify-content: center;
    width: 83px;
    height: 50px;
    box-shadow: 0 1px 2px rgba(0, 0, 0, 0.5);
}
.tiles span::before {
    content: "";
    width: 22px;
    height: 2px;
    background: #fff;
}
.orange { background: linear-gradient(#f59a62, #e06e24 50%, #b5510d); }
.gray { background: linear-gradient(#c4c4c4, #999 50%, #707070); }
.gold { background: linear-gradient(#ffcf33, #dfaa0e 50%, #ae8100); }
.blue { background: linear-gradient(#668ed3, #3f68b2 50%, #2c4d8a); }
.green { background: linear-gradient(#88c163, #679b47 50%, #4b762e); }
.preview h3 {
    margin: 12px 0 3px 11px;
    font-size: 11px;
    font-weight: bold;
    color: #666;
}
.preview p {
    flex: 1;
    padding: 1px 9px;
    border: 1px solid #a5a9b0;
    font-size: 11px;
    line-height: 13px;
}
.dlg-foot {
    display: flex;
    justify-content: flex-end;
    gap: 11px;
    padding: 4px 7px 8px;
}
.dlg-foot button {
    width: 73px;
    height: 21px;
    border: 1px solid #adadad;
    background: #e1e1e1;
    font-size: 11px;
    line-height: 17px;
}
.dlg-foot .ok {
    border: 2px solid #0078d7;
}
```
